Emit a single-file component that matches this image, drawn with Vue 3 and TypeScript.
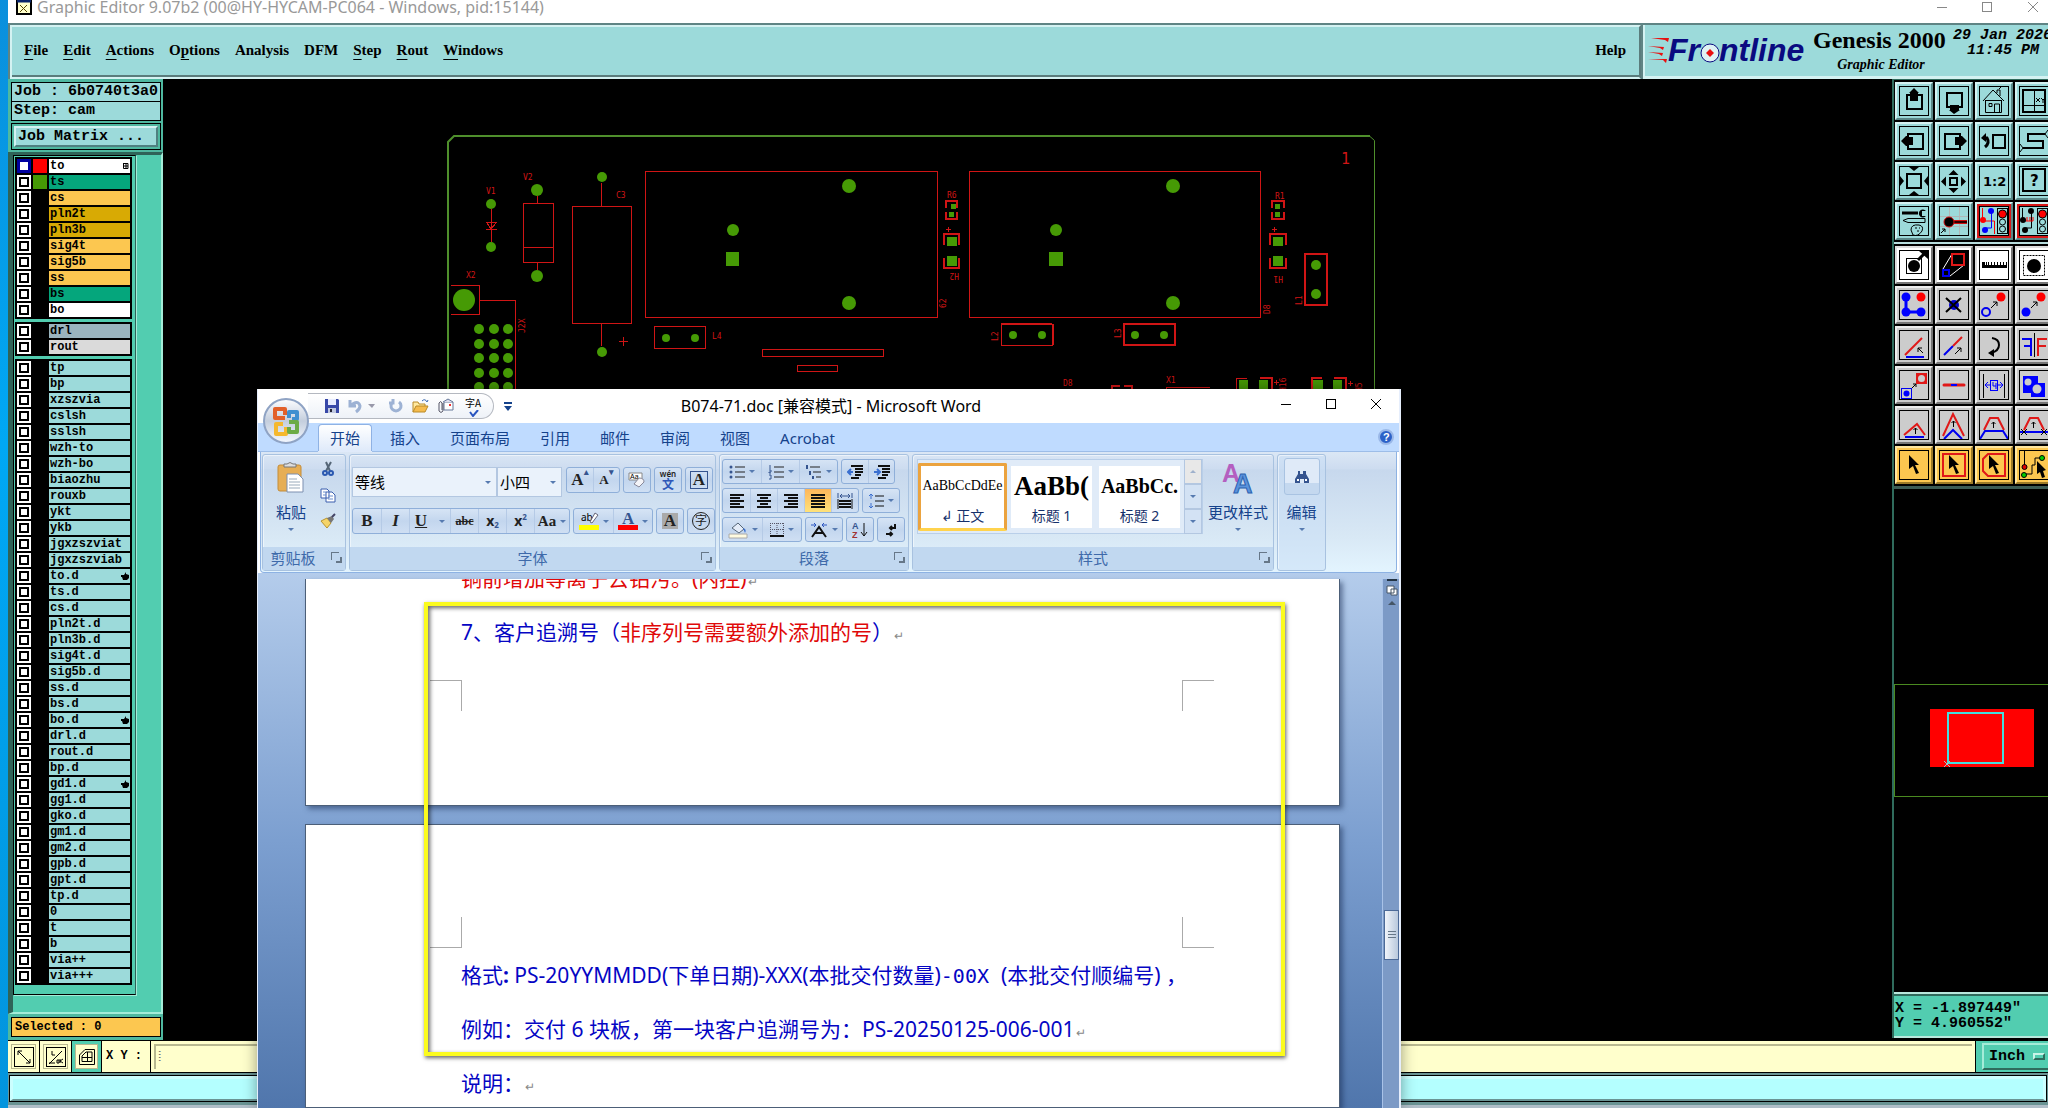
<script setup lang="ts">
import { ref } from 'vue'

interface Layer { name: string; color: string; swatch?: string; mark?: 'grid' | 'hand'; active?: boolean }
interface Tool { label: string; tone: string; art: string }

const AQUA = '#9cdada'
const menus: [string, string, string][] = [
  ['', 'F', 'ile'], ['', 'E', 'dit'], ['', 'A', 'ctions'], ['O', 'p', 'tions'], ['Analysis', '', ''],
  ['DFM', '', ''], ['', 'S', 'tep'], ['', 'R', 'out'], ['', 'W', 'indows'],
]

const plain = (names: string, color: string): Layer[] => names.split(' ').map((name) => ({ name, color }))
const hands = ['to.d', 'bo.d', 'gd1.d']
const groups: Layer[][] = [
  [
    { name: 'to', color: '#ffffff', swatch: '#ff0000', mark: 'grid', active: true },
    { name: 'ts', color: '#05a67c', swatch: '#469a05' },
    { name: 'cs', color: '#fcc750' },
    { name: 'pln2t', color: '#d8aa04' },
    { name: 'pln3b', color: '#d8aa04' },
    { name: 'sig4t', color: '#fcc750' },
    { name: 'sig5b', color: '#fcc750' },
    { name: 'ss', color: '#fcc750' },
    { name: 'bs', color: '#05a67c' },
    { name: 'bo', color: '#ffffff' },
  ],
  [{ name: 'drl', color: '#9ab4be' }, { name: 'rout', color: '#dadada' }],
  plain(
    'tp bp xzszvia cslsh sslsh wzh-to wzh-bo biaozhu rouxb ykt ykb jgxzszviat jgxzszviab to.d ts.d cs.d pln2t.d pln3b.d sig4t.d sig5b.d ss.d bs.d bo.d drl.d rout.d bp.d gd1.d gg1.d gko.d gm1.d gm2.d gpb.d gpt.d tp.d 0 t b via++ via+++',
    AQUA,
  ).map((l) => (hands.includes(l.name) ? { ...l, mark: 'hand' as const } : l)),
]

const k = 'fill="none" stroke="#000"'
const red = 'fill="none" stroke="#e01818" stroke-width="2"'
const blue = 'fill="none" stroke="#0000f0" stroke-width="2"'
const lights = `<rect x="18.5" y="2.5" width="10" height="25" ${k}/><circle cx="23.500" cy="8" r="4" fill="#f00" stroke="#000"/><circle cx="23.500" cy="16" r="3" ${k}/><circle cx="23.500" cy="23" r="3" ${k}/>`
const arrow = '<path d="M10 5l10 10-4 0 4 8-3 1-3-8-4 3z"/>'

const navTools: Tool[] = [
  { label: 'Pan up', tone: 'aqua', art: `<rect x="8" y="9" width="15" height="14" ${k} stroke-width="2"/><path d="M15 2l5 5h-1v8h-8V7h-1z"/>` },
  { label: 'Pan down', tone: 'aqua', art: `<rect x="8" y="7" width="15" height="14" ${k} stroke-width="2"/><path d="M15 28l-5-4h1v-5h9v5h1z"/>` },
  { label: 'Home', tone: 'aqua', art: `<path d="M4 15L14 4l11 11M6.500 14v12.500h16V14M6 14.500h17M18 7V4h3v6M10 17.500h3v3h-3zM15.500 26v-8h5v8M20 3l2-2" ${k}/>` },
  { label: 'Zoom XY', tone: 'aqua', art: `<rect x="4" y="4" width="22" height="22" ${k} stroke-width="2"/><path d="M15.500 4v22M4 19.500h22M17 12l4 4m0-4l-4 4M22 12l2 2 2-2m-2 2v3" ${k}/>` },
  { label: 'Pan left', tone: 'aqua', art: `<rect x="9" y="8" width="15" height="15" ${k} stroke-width="2"/><path d="M2 15l5-5h1v1h6v8H8v1H7z"/>` },
  { label: 'Pan right', tone: 'aqua', art: `<rect x="6" y="8" width="15" height="15" ${k} stroke-width="2"/><path d="M28 15l-5-5h-1v1h-6v8h6v1h1z"/>` },
  { label: 'Previous view', tone: 'aqua', art: `<rect x="14" y="9" width="12" height="13" ${k} stroke-width="2"/><path d="M4 12h4q3 5-2 9" ${k} stroke-width="3"/><path d="M2 12l5-5v9z"/>` },
  { label: 'Serpentine', tone: 'aqua', art: `<path d="M26 8H9v7h15v7H4" ${k} stroke-width="2"/><path d="M29 4l-3 4 3 4M1 18l3 4-3 4" ${k}/>` },
  { label: 'Zoom in', tone: 'aqua', art: `<rect x="8" y="8" width="14" height="14" ${k} stroke-width="2"/><path d="M10 1h10l-5 4zM10 29h10l-5-4zM1 10v10l4-5zM29 10v10l-4-5z"/>` },
  { label: 'Zoom out', tone: 'aqua', art: `<rect x="11" y="12" width="7" height="7" ${k} stroke-width="2"/><path d="M14.500 4l5 5h-10zM14.500 27l5-5h-10zM2 15.500l5-5v10zM27 15.500l-5-5v10z"/>` },
  { label: 'Scale 1:2', tone: 'aqua', art: '<text x="4" y="20" font-family="DejaVu Sans" font-weight="700" font-size="13">1:2</text>' },
  { label: 'Help', tone: 'aqua', art: `<rect x="4" y="3" width="22" height="22" ${k} stroke-width="2"/><text x="11" y="20" font-family="DejaVu Sans" font-weight="700" font-size="15">?</text>` },
  { label: 'Setup', tone: 'aqua', art: `<path d="M3 7h16" ${k} stroke-width="3"/><path d="M27 5a4 4 0 1 0 0 5h-4V5z"/><path d="M4 14.500l5-2h17v4H9zM12 24q0-6 8-5 5 1 3 6-4 6-9 4zM16 22h2m2 0h1m-3 3h2" ${k}/>` },
  { label: 'Snap', tone: 'aqua', art: `<path d="M10.500 0v30M20.500 0v30M0 10.500h30M0 20.500h30" stroke="#b0b8b8"/><path d="M12 16h16" stroke="#d01010" stroke-width="4"/><path d="M12 16h16" stroke="#300" stroke-width="2"/><circle cx="10" cy="16" r="5" stroke="#d01010"/><path d="M2 27l4-4m-3 0h3v3" ${k}/>` },
  { label: 'Nets', tone: 'aqua alert', art: `<path d="M3.500 2v13h12v13" ${k} style="stroke:#f00"/><path d="M12.500 4v18h-6" ${k} style="stroke:#00f"/><circle cx="4" cy="14" r="3" fill="#f00"/><circle cx="12" cy="5" r="3" fill="#00f"/><circle cx="6" cy="24" r="3" fill="#00f"/>${lights}` },
  { label: 'Shorts', tone: 'aqua alert', art: `<path d="M3.500 2v13h3M12.500 4v18h-6" ${k}/><path d="M7 15h7M8 11v4m3-4v4m3-4v4" stroke="#f00"/><circle cx="4" cy="14" r="3"/><circle cx="12" cy="5" r="3"/><circle cx="6" cy="24" r="3"/>${lights}` },
]
const editTools: Tool[] = [
  { label: 'Pad', tone: 'white', art: `<rect x="7.500" y="8.500" width="15" height="15" ${k}/><circle cx="15" cy="16" r="6"/><path d="M19 10l6-6" stroke="#000" stroke-width="3"/><path d="M20 1h9v8z"/>` },
  { label: 'Transform', tone: 'white', art: `<rect x="1" y="1" width="28" height="28"/><path d="M13 4L4 19M25 15L11 26" stroke="#fff"/><rect x="13" y="4" width="12" height="11" ${red}/><rect x="4" y="20" width="6" height="6" ${blue}/>` },
  { label: 'Measure', tone: 'white', art: '<path d="M3 12v6h25v-6h-1v3h-2v-3h-1v3h-2v-3h-1v3h-2v-3h-1v3h-2v-3h-1v3h-2v-3h-1v3h-2v-3h-1v3h-2v-3H8v3H6v-3z"/>' },
  { label: 'Select pad', tone: 'white', art: `<rect x="4.500" y="5.500" width="21" height="20" ${k} stroke-dasharray="2 1"/><circle cx="15" cy="16" r="7"/>` },
  { label: 'Add', tone: 'gray', art: '<path d="M7 7v15h15" fill="none" stroke="#00f" stroke-width="3"/><circle cx="7" cy="7" r="4.500" fill="#00f"/><circle cx="7" cy="22" r="4.500" fill="#00f"/><circle cx="22" cy="22" r="4.500" fill="#00f"/><circle cx="22" cy="7" r="4.500" fill="#f00"/>' },
  { label: 'Delete', tone: 'gray', art: `<circle cx="15" cy="15" r="5" fill="#00c"/><path d="M7 8l15 14M22 8L7 22" ${k} stroke-width="2"/>` },
  { label: 'Copy', tone: 'gray', art: `<circle cx="7" cy="22" r="4" ${blue}/><circle cx="22" cy="7" r="4.500" fill="#f00"/><path d="M12 18l6-6m-4 0h4v4" ${k}/>` },
  { label: 'Move', tone: 'gray', art: `<circle cx="7" cy="22" r="4.500" fill="#00f"/><circle cx="22" cy="7" r="4.500" fill="#f00"/><path d="M12 18l6-6m-4 0h4v4" ${k}/>` },
  { label: 'Angle', tone: 'gray', art: `<path d="M6 25L23 8" ${red}/><path d="M7 27h18" ${blue}/><path d="M24 23l-5-5m0 4v-4h4" ${k}/>` },
  { label: 'Extend', tone: 'gray', art: `<path d="M5 25l9-9" ${blue}/><path d="M14 16l9-9" ${red}/><path d="M16 24l6-6m-4 0h4v4" ${k}/>` },
  { label: 'Rotate', tone: 'gray', art: `<path d="M13 8q7 1 7 7t-8 8" ${k} stroke-width="2"/><path d="M9 23l6-4v8z"/>` },
  { label: 'Mirror', tone: 'gray', art: `<path d="M15.500 3v24" ${k}/><path d="M3 9h9v17M12 16H5" ${blue}/><path d="M28 9h-9v17M19 16h8" ${red}/>` },
  { label: 'Change symbol', tone: 'gray', art: `<rect x="2.500" y="18.500" width="10" height="10" ${blue} style="stroke-width:1"/><circle cx="7.500" cy="23.500" r="3" fill="#00f"/><rect x="17" y="3" width="11" height="11" fill="#e01818"/><circle cx="22.500" cy="8.500" r="3.500" fill="#ccc"/><path d="M13 18l4-4m-3 0h3v3" ${k}/>` },
  { label: 'Break', tone: 'gray', art: '<path d="M5 15h20" stroke="#e01818" stroke-width="3" stroke-linecap="round"/><path d="M12 15h6" stroke="#00f" stroke-width="2"/>' },
  { label: 'Spacing', tone: 'gray', art: `<path d="M4.500 4v24M25.500 4v24" ${k}/><path d="M6 15h5m8 0h5M9 12l-3 3 3 3M21 12l3 3-3 3" stroke="#00f" fill="none"/><rect x="11.500" y="10.500" width="7" height="10" stroke="#00f" fill="none"/><path d="M14 12v4h3m0-3v6" stroke="#00f" fill="none"/>` },
  { label: 'Merge', tone: 'gray', art: '<rect x="4" y="6" width="15" height="17" fill="#00f"/><rect x="12" y="13" width="14" height="14" fill="#00f"/><circle cx="9" cy="12" r="3.500" fill="#ccc"/><circle cx="18" cy="19" r="4.500" fill="#ccc"/>' },
  { label: 'Corner low', tone: 'gray', art: `<path d="M5 25L18 14l8 11" ${red}/><path d="M6 27h19" ${blue}/><path d="M16.500 24v-6m-2 2l2-2 2 2" ${k}/>` },
  { label: 'Corner high', tone: 'gray', art: `<path d="M4 26L14 4l11 22" ${red}/><path d="M5 29l9-9 9 9" ${blue}/><path d="M14.500 17v-6m-2 2l2-2 2 2" ${k}/>` },
  { label: 'Bridge', tone: 'gray', art: `<path d="M5 20l6-12h8l6 12" ${red}/><path d="M1 29l5-8h18l5 8" ${blue}/><path d="M14.500 18v-6m-2 2l2-2 2 2" ${k}/>` },
  { label: 'Bridge cut', tone: 'gray', art: `<path d="M5 20l6-12h8l6 12" ${red}/><path d="M1 22h28" ${blue}/><path d="M2 19l6 6m0-6l-6 6M22 19l6 6m0-6l-6 6M14.500 18v-6m-2 2l2-2 2 2" ${k}/>` },
  { label: 'Select', tone: 'amber', art: arrow },
  { label: 'Select box', tone: 'amber', art: `<rect x="4" y="4" width="22" height="22" ${red}/>${arrow}` },
  { label: 'Select polygon', tone: 'amber', art: `<path d="M9 4h17v22H9l-5-5V9z" ${red}/>${arrow}` },
  { label: 'Select net', tone: 'amber', art: `<path d="M5.500 1v16M6 24h7v-9h3V8h6" ${k}/><circle cx="5.500" cy="17" r="2.500" fill="#d00" stroke="#000"/><circle cx="5" cy="25" r="2.500" fill="#0c0" stroke="#000"/><circle cx="23" cy="8" r="2.500" fill="#0c0" stroke="#000"/><path d="M18 11l9 9-3 1 2 6-3 1-2-6-3 2z"/>` },
]

const dots = [329, 344, 358, 373, 387].flatMap((y) => [479, 494, 508].map((x) => ({ x, y })))
const vias = [
  [491, 204, 5], [491, 247, 5], [537, 190, 6], [537, 276, 6], [602, 177, 5], [602, 352, 5], [464, 300, 11],
  [849, 186, 7], [733, 230, 6], [849, 303, 7], [1173, 186, 7], [1056, 230, 6], [1173, 303, 7],
  [1316, 265, 5], [1316, 294, 5], [666, 338, 4], [695, 338, 4], [1013, 335, 4], [1042, 335, 4], [1135, 335, 4], [1164, 335, 4],
]
const pads = [
  [726, 252, 13, 14], [1049, 252, 14, 14], [951, 204, 5, 5], [949, 212, 5, 5], [947, 237, 10, 9], [947, 256, 10, 10],
  [1275, 204, 5, 5], [1275, 212, 5, 5], [1273, 237, 10, 9], [1273, 256, 10, 10],
  [1239, 380, 9, 10], [1259, 380, 9, 10], [1313, 380, 10, 10], [1333, 380, 9, 10],
]
const marks: [string, number, number, number][] = [
  ['V1', 486, 194, 0], ['V2', 523, 180, 0], ['C3', 616, 198, 0], ['X2', 466, 278, 0], ['J2X', 525, 333, -90], ['L4', 712, 339, 0],
  ['R6', 947, 198, 0], ['H2', 959, 273, 180], ['62', 946, 308, -90], ['R1', 1275, 199, 0], ['H1', 1283, 276, 180],
  ['L1', 1302, 305, -90], ['D8', 1270, 314, -90], ['L2', 998, 341, -90], ['L3', 1121, 338, -90],
  ['D8', 1063, 386, 0], ['X1', 1166, 383, 0], ['H16', 1286, 392, -90], ['H5', 1362, 392, -90],
]

const tabs = ['开始', '插入', '页面布局', '引用', '邮件', '审阅', '视图', 'Acrobat']
const layerState = ref<Record<string, boolean>>({})
const xy = ref('')

const up = '#35548f'
const row = (a: number, b: number, y: number) => `<path d="M${a} ${y + 1}H${b}" stroke="#111" stroke-width="2"/>`
const five = (spans: [number, number][]) => spans.map((s, i) => row(s[0], s[1], 1 + i * 3)).join('')
const wide: [number, number] = [1, 15]
const aligns = [
  { label: '左对齐', art: five([[1, 15], [1, 11], [1, 15], [1, 11], [1, 15]]) },
  { label: '居中', art: five([[1, 15], [4, 12], [1, 15], [4, 12], [1, 15]]) },
  { label: '右对齐', art: five([[1, 15], [5, 15], [1, 15], [5, 15], [1, 15]]) },
  { label: '两端对齐', art: five([wide, wide, wide, wide, wide]), on: true },
  { label: '分散对齐', art: '<path d="M1 0v5M15 0v5M3 3h10M5 1L3 3l2 2M11 1l2 2-2 2" fill="none" stroke="#35548f"/><path d="M2 8h12M2 11h12M2 14h12" stroke="#111" stroke-width="2"/><path d="M1 6v10M15 6v10" stroke="#111"/>' },
]
const lists = [
  { label: '项目符号', art: `<path d="M6 3h10M6 8h10M6 13h10" stroke="#222"/><circle cx="2" cy="3" r="1.500" fill="${up}"/><circle cx="2" cy="8" r="1.500" fill="${up}"/><circle cx="2" cy="13" r="1.500" fill="${up}"/>` },
  { label: '编号', art: `<path d="M6 3h10M6 8h10M6 13h10" stroke="#222"/><path d="M2 1v4M1 6h2v2H1v1h2M1 11h2v4H1" stroke="${up}" fill="none"/>` },
  { label: '多级列表', art: `<path d="M4 3h10M7 8h8M10 13h5" stroke="#222"/><path d="M1 1v4M4 7v3h-1M7 12v3" stroke="${up}" fill="none" stroke-width="2"/>` },
]
const indents = [
  { label: '减少缩进', art: `<path d="M4 2h12M8 5h8M8 8h8M8 11h6M4 14h8" stroke="#111" stroke-width="2"/><path d="M6 8H1m3-3L1 8l3 3" stroke="#3a6fd0" fill="none" stroke-width="2"/>` },
  { label: '增加缩进', art: `<path d="M4 2h12M8 5h8M8 8h8M8 11h6M4 14h8" stroke="#111" stroke-width="2"/><path d="M0 8h5M3 5l3 3-3 3" stroke="#3a6fd0" fill="none" stroke-width="2"/>` },
]
</script>

<template>
  <div class="desktop">
    <div class="genesis">
      <header class="titlebar">
        <svg class="app-icon" width="16" height="16" viewBox="0 0 16 16"><rect x="1" y="1" width="14" height="13" fill="#ffc" stroke="#000" stroke-width="2" /><path d="M1 1h14" stroke="#0a246a" stroke-width="3" /><path d="M4 5l7 7M11 5l-7 7" stroke="#554400" /></svg>
        <span class="caption">Graphic Editor 9.07b2 (00@HY-HYCAM-PC064 - Windows, pid:15144)</span>
        <svg width="104" height="14" viewBox="0 0 104 14" fill="none" stroke="#888"><path d="M2 7.500h10M93 2l10 10M103 2L93 12" /><rect x="47.500" y="2.500" width="9" height="9" /></svg>
      </header>

      <div class="topbar">
        <nav class="menubar">
          <a v-for="m in menus" :key="m.join('')" href="#">{{ m[0] }}<u>{{ m[1] }}</u>{{ m[2] }}</a>
          <a href="#" class="help">Help</a>
        </nav>
        <div class="brand">
          <svg width="164" height="34" viewBox="0 0 164 34">
            <path d="M5 5h18l-1 4-3-2zM2 13l16 1-1 3-3-2zM2 19l15 1-1 3-3-2zM2 26h19l-1 4-3-3z" fill="#e81010" />
            <g font-family="Liberation Sans" font-size="32" font-weight="700" font-style="italic" fill="#0a0a80"><text x="22" y="28">Fr</text><text x="73" y="28">ntline</text></g>
            <circle cx="64" cy="20" r="9" fill="#dff2f4" stroke="#0a0a80" stroke-width="1" /><path d="M64 16l4 4-4 4-4-4z" fill="#e81010" />
          </svg>
          <div class="product"><strong>Genesis 2000</strong><em>Graphic Editor</em></div>
          <div class="clock"><span>29 Jan 2026</span><span>11:45 PM</span></div>
        </div>
      </div>

      <div class="work">
        <aside class="side">
          <div class="field">Job : 6b0740t3a0</div>
          <div class="field step">Step: cam</div>
          <div class="matrix"><button>Job Matrix ...</button></div>
          <div class="layers">
            <div class="frame">
              <div v-for="(g, gi) in groups" :key="gi" class="group">
                <div v-for="l in g" :key="l.name" class="layer">
                  <input :id="'ly-' + l.name" v-model="layerState[l.name]" type="checkbox" :class="{ active: l.active }">
                  <i :style="{ background: l.swatch }"></i>
                  <label :for="'ly-' + l.name" :style="{ background: l.color }">{{ l.name }}
                    <svg v-if="l.mark === 'grid'" width="6" height="6"><path d="M0 .5h5v5H.5V0M3 0v5M0 3h5" fill="none" stroke="#000" /></svg>
                    <svg v-if="l.mark === 'hand'" width="8" height="8"><path d="M0 3h3l2-3v2l3 1v3L6 8H2L1 5H0z" /></svg>
                  </label>
                </div>
              </div>
            </div>
          </div>
          <div class="selected">Selected : 0</div>
        </aside>

        <main class="canvas">
          <svg width="100%" height="100%">
            <g transform="translate(-163 -79)">
              <path d="M448 400V142l6-6H1370" fill="none" stroke="#4f8f2c" stroke-width="2" />
              <path d="M1370 136.500l4.500 4V400" fill="none" stroke="#4f8f2c" />
              <g fill="none" stroke="#d01515" shape-rendering="crispEdges">
                <path d="M491.500 209v33M486 222h11M487 223l4 6 5-6M486 229h11M537.500 196v7M523.500 203.500h30v59h-30zM523 247.500h30M537.500 262v8M601.500 183v23M572.500 206.500h59v117h-59zM601.500 323v23M619 341.500h9M623.500 337v9" />
                <path d="M645.500 171.500h292v146h-292zM654.500 326.500h51v22h-51zM762.500 349.500h121v7h-121zM797.500 365.500h40v6h-40zM451 285.500h28v29h-28M479 300.500h36V400" />
                <path d="M969.500 171.500h291v146h-291zM1001.500 324.500h51v21h-51zM946 229.500h5M948.500 227v5M1272 229.500h5M1274.500 227v5M1166 400v-12.500h44M1274 382.500h5M1276.500 380v5M1348 383.500h5M1350.500 381v5M1236.500 390v-12h10" />
                <path d="M1053 324v21M1001 324h51M1124 324h51v21h-51zM1305 254h22v51h-22zM946 208v-7h11v7M946 212v7h11v-7M944 245v-11h15v11M944 258v10h15v-10M1272 208v-7h12v7M1272 212v7h12v-7M1270 245v-11h16v11M1270 258v10h16v-10M1260 378h12v12M1312 390v-12h10M1334 378h12v12M1112 390v-4h8M1124 386h8v4" stroke-width="2" />
              </g>
              <g fill="#469a05">
                <circle v-for="(v, i) in vias" :key="i" :cx="v[0]" :cy="v[1]" :r="v[2]" />
                <circle v-for="(d, i) in dots" :key="'d' + i" :cx="d.x" :cy="d.y" r="5" />
                <rect v-for="(p, i) in pads" :key="'p' + i" :x="p[0]" :y="p[1]" :width="p[2]" :height="p[3]" />
              </g>
              <g fill="#d01515" font-family="DejaVu Sans Mono" font-size="8">
                <text v-for="(m, i) in marks" :key="i" :transform="`translate(${m[1]} ${m[2]}) rotate(${m[3]})`">{{ m[0] }}</text>
                <text x="1341" y="164" font-size="15">1</text>
              </g>
            </g>
          </svg>
        </main>

        <aside class="tools">
          <div class="grid nav"><button v-for="t in navTools" :key="t.label" :class="t.tone" :aria-label="t.label"><svg width="28" height="28" viewBox="1 1 28 28" v-html="t.art"></svg></button></div>
          <div class="grid edit"><button v-for="t in editTools" :key="t.label" :class="t.tone" :aria-label="t.label"><svg width="28" height="28" viewBox="1 1 28 28" v-html="t.art"></svg></button></div>
          <div class="overview">
            <svg width="156" height="114" viewBox="0 0 156 114"><rect x=".5" y=".5" width="160" height="112" fill="none" stroke="#4a8a20" /><rect x="36" y="25" width="104" height="58" fill="#f00" /><rect x="54" y="29" width="55" height="50" fill="none" stroke="#4dd" stroke-width="2" /><path d="M50 83l6-6M50 77l6 6" stroke="#9cc" /></svg>
          </div>
          <div class="coords"><span>X = -1.897449"</span><span>Y = 4.960552"</span></div>
        </aside>
      </div>

      <div class="command">
        <button aria-label="Diagonal"><svg width="20" height="20" fill="none" stroke="#000"><rect x=".5" y=".5" width="19" height="19" /><path d="M4 4l12 12M4 8V4h4M16 12v4h-4" /></svg></button>
        <button aria-label="Angle"><svg width="20" height="20" fill="none" stroke="#000"><rect x=".5" y=".5" width="19" height="19" /><path d="M3 17L16 4M3 16h6M6 4v4h3M11 13h2v3h-2zM14 12v4m0-2l3-2m-3 2l3 2" /></svg></button>
        <button class="on" aria-label="Grid"><svg width="16" height="16" fill="none" stroke="#000"><path d="M.5 15.500V6L6 .5h9.500v15zM3 12.500V7l4-4h6v9.500zM8.500 3v10M3 8.500h10" /></svg></button>
        <label for="xy">X Y :</label>
        <input id="xy" v-model="xy" type="text" placeholder="⦙">
        <div class="unit"><button>Inch <i></i></button></div>
      </div>
      <div class="status"><div></div></div>
      <div class="floor"></div>
    </div>

    <section class="word">
      <header class="w-title">
        <div class="qat">
          <svg width="16" height="16" viewBox="0 0 16 16"><path d="M1 1h13l1 1v13H1z" fill="#3848a8" /><path d="M4 1h8v6H4z" fill="#e8ecff" /><path d="M4 10h8v5H4z" fill="#c0c8e0" /><path d="M6 11h2v3H6z" fill="#223" /></svg>
          <svg width="27" height="16" viewBox="0 0 27 16" class="undo"><path d="M2 2v6h6M2 8q8-7 10 0 0 3-4 6" fill="none" stroke="#9db2d4" stroke-width="3" /><path d="M20 6h7l-3 4z" fill="#99a" /></svg>
          <svg width="16" height="16" viewBox="0 0 16 16"><path d="M11 4a5 5 0 1 1-6 0M5 1v4H1" fill="none" stroke="#9db2d4" stroke-width="3" /></svg>
          <svg width="17" height="16" viewBox="0 0 17 16"><path d="M1 14V4h5l1 2h6v3" fill="#ffe9a0" stroke="#b98a28" /><path d="M1 14l3-6h12l-3 6z" fill="#f5bb4d" stroke="#b98a28" /><path d="M10 3q3-3 5 1l1-2" fill="none" stroke="#3868b0" /></svg>
          <svg width="17" height="16" viewBox="0 0 17 16"><path d="M7 4h9v8H7z" fill="#fff" stroke="#66789a" /><path d="M6 4l5-3 5 3" fill="#dde" stroke="#66789a" /><path d="M12 6h2v2h-2z" fill="#e33" /><path d="M6 5v8q-2 3-4 0V5q2-3 3 0v7" fill="none" stroke="#556" /></svg>
          <span class="spell">字A<svg width="10" height="7"><path d="M1 2l3 4 5-6" fill="none" stroke="#2a55c0" stroke-width="2" /></svg></span>
        </div>
        <svg class="more" width="8" height="9"><path d="M0 1h8" stroke="#15428b" stroke-width="2" /><path d="M0 4h8L4 9z" fill="#15428b" /></svg>
        <h1>B074-71.doc [兼容模式] - Microsoft Word</h1>
        <svg width="102" height="14" viewBox="0 0 102 14" fill="none" stroke="#000"><path d="M1 7.500h10M91 2l10 10M101 2L91 12" /><rect x="46.500" y="2.500" width="9" height="9" /></svg>
      </header>
      <button class="orb" aria-label="Office">
        <svg width="46" height="46" viewBox="0 0 46 46">
          <defs><linearGradient id="orb" x1="0" y1="0" x2="0" y2="1"><stop offset="0" stop-color="#fdfdff" /><stop offset=".5" stop-color="#c4cedd" /><stop offset="1" stop-color="#f4f8ff" /></linearGradient></defs>
          <circle cx="23" cy="23" r="22" fill="url(#orb)" stroke="#8fa3c4" stroke-width="2" />
          <g fill="none" stroke-width="4" stroke-linejoin="round"><path d="M22 20h-10V11h10v6" stroke="#e2602a" /><path d="M26 20v-6h8v7h-5" stroke="#3f8fd0" /><path d="M20 26h-7v10h10V29" stroke="#f5b82e" /><path d="M26 24h8v10h-8v-5" stroke="#6cab45" /></g>
        </svg>
      </button>

      <nav class="tabs">
        <button v-for="(t, i) in tabs" :key="t" :class="{ cur: i === 0 }">{{ t }}</button>
        <svg class="q" width="16" height="16" viewBox="0 0 16 16"><circle cx="8" cy="8" r="7" fill="#2c62c8" stroke="#9ab8e8" stroke-width="2" /><text x="5" y="12" font-family="Liberation Sans" font-weight="700" font-size="11" fill="#fff">?</text></svg>
      </nav>

      <div class="ribbon">
        <div class="rg clip">
          <div class="rb">
            <button class="big"><svg width="28" height="32" viewBox="0 0 28 32"><rect x="1" y="3" width="23" height="26" rx="2" fill="#e6ae55" stroke="#c48c38" /><path d="M7 5V2h3q3-3 6 0h3v3z" fill="#ddd" stroke="#777" /><path d="M10 12h11l5 5v13H10z" fill="#fff" stroke="#7c8fb0" /><path d="M12 17h8M12 20h11M12 23h11M12 26h11" stroke="#9ab" /></svg><span>粘贴</span><i class="car"></i></button>
            <div class="small">
              <button aria-label="剪切"><svg width="16" height="16" viewBox="0 0 16 16"><path d="M6 1l4 9M11 1L6 10" stroke="#567" stroke-width="2" /><circle cx="5" cy="12" r="2" fill="none" stroke="#2a58b0" stroke-width="2" /><circle cx="11" cy="12" r="2" fill="none" stroke="#2a58b0" stroke-width="2" /></svg></button>
              <button aria-label="复制"><svg width="16" height="16" viewBox="0 0 16 16"><path d="M1 2h6l2 2v7H1zM6 5h6l3 3v7H6z" fill="#fff" stroke="#3a5fae" /><path d="M3 5h3M3 8h3M8 9h5M8 12h5" stroke="#6a8fce" /></svg></button>
              <button aria-label="格式刷"><svg width="16" height="16" viewBox="0 0 16 16"><path d="M1 8l6-3 4 5-4 5z" fill="#f5d469" stroke="#b9942f" /><path d="M7 5l5-2 2 3-3 4z" fill="#777" /><path d="M12 4l3-3" stroke="#446" stroke-width="2" /></svg></button>
            </div>
          </div>
          <footer>剪贴板<i class="dlg"></i></footer>
        </div>

        <div class="rg font">
          <div class="rb rows">
            <div class="line">
              <div class="combos">
                <span class="combo face"><select aria-label="字体"><option>等线</option></select></span>
                <span class="combo size"><select aria-label="字号"><option>小四</option></select></span>
              </div>
              <div class="bg"><button class="serif">A<sup>▴</sup></button><button class="serif mini">A<sup>▾</sup></button></div>
              <div class="bg"><button aria-label="清除格式"><svg width="18" height="18" viewBox="0 0 18 18"><path d="M1 2h13v7H1z" fill="#fff" stroke="#888" /><text x="2" y="8" font-size="7" font-family="Liberation Sans">Aa</text><path d="M6 13l5-6q5 0 5 4l-5 5z" fill="#f4f4f8" stroke="#889" /></svg></button></div>
              <div class="bg"><button class="wen"><small>wén</small><b>文</b></button></div>
              <div class="bg"><button class="serif boxed"><span>A</span></button></div>
            </div>
            <div class="line">
              <div class="bg w">
                <button class="serif">B</button><button class="serif it">I</button><button class="serif un car-r"><span>U</span><i class="car"></i></button><button class="serif abc">abc</button><button class="sub">x<sub>2</sub></button><button class="sub">x<sup>2</sup></button><button class="serif aa car-r">Aa<i class="car"></i></button>
              </div>
              <div class="bg w2">
                <button class="car-r" aria-label="突出显示"><svg width="20" height="20" viewBox="0 0 20 20"><text x="2" y="10" font-family="Noto Sans" font-size="10">ab</text><path d="M11 11l5-9 3 2-6 8z" fill="#fff" stroke="#667" /><path d="M0 14h20v5H0z" fill="#ff0" /></svg><i class="car"></i></button>
                <button class="car-r" aria-label="字体颜色"><svg width="20" height="20" viewBox="0 0 20 20"><text x="4" y="13" font-family="Liberation Serif" font-weight="700" font-size="17" fill="#35548f">A</text><path d="M0 14h20v5H0z" fill="#f00" /></svg><i class="car"></i></button>
              </div>
              <div class="bg"><button class="serif shaded"><span>A</span></button></div>
              <div class="bg"><button class="ring"><span>字</span></button></div>
            </div>
          </div>
          <footer>字体<i class="dlg"></i></footer>
        </div>

        <div class="rg para">
          <div class="rb rows">
            <div class="line">
              <div class="bg w3"><button v-for="a in lists" :key="a.label" class="car-r" :aria-label="a.label"><svg width="16" height="16" v-html="a.art"></svg><i class="car"></i></button></div>
              <div class="bg w26"><button v-for="a in indents" :key="a.label" :aria-label="a.label"><svg width="16" height="16" v-html="a.art"></svg></button></div>
            </div>
            <div class="line">
              <div class="bg w27"><button v-for="a in aligns" :key="a.label" :class="{ on: a.on }" :aria-label="a.label"><svg width="16" height="16" v-html="a.art"></svg></button></div>
              <div class="bg w38"><button class="car-r" aria-label="行距"><svg width="16" height="16"><path d="M7 3h9M7 8h9M7 13h9" stroke="#111" /><path d="M3 1v5M1 3l2-2 2 2M3 10v5M1 13l2 2 2-2" fill="none" stroke="#3a6fd0" /></svg><i class="car"></i></button></div>
            </div>
            <div class="line">
              <div class="bg w3b">
                <button class="car-r" aria-label="底纹"><svg width="20" height="18"><path d="M4 7l6-5 6 6-5 4z" fill="#e4ecf8" stroke="#567" /><path d="M15 7q4 1 2 5z" fill="#3a6fd0" /><path d="M1 13h18v4H1z" fill="#fffbe0" stroke="#aaa" /></svg><i class="car"></i></button>
                <button class="car-r" aria-label="边框"><svg width="14" height="14"><path d="M.5 0v12M7 0v12M13.500 0v12M0 .5h14M0 6.500h14" stroke="#556" stroke-dasharray="1 1" /><path d="M0 13h14" stroke="#111" stroke-width="2" /></svg><i class="car"></i></button>
              </div>
              <div class="bg w38"><button class="car-r" aria-label="中文版式"><svg width="18" height="16"><path d="M2 15l7-10 7 10M5 11h8" stroke="#111" fill="none" stroke-width="2" /><path d="M1 3h5M4 1l2 2-2 2M17 3h-5M14 1l-2 2 2 2" stroke="#2a55c0" fill="none" /></svg><i class="car"></i></button></div>
              <div class="bg"><button aria-label="排序"><svg width="16" height="18"><text x="0" y="8" font-size="9" font-family="Liberation Sans" font-weight="700" fill="#35548f">A</text><text x="0" y="17" font-size="9" font-family="Liberation Sans" font-weight="700" fill="#a03030">Z</text><path d="M12 2v13M9 11l3 4 3-4" stroke="#111" fill="none" /></svg></button></div>
              <div class="bg"><button aria-label="显示标记"><svg width="16" height="16"><path d="M12 2v4H7M9 4L7 6l2 2M3 12h6M7 10l2 2-2 2" stroke="#111" fill="none" stroke-width="2" /></svg></button></div>
            </div>
          </div>
          <footer>段落<i class="dlg"></i></footer>
        </div>

        <div class="rg style">
          <div class="rb">
            <div class="gallery">
              <button class="st sel"><span class="s1">AaBbCcDdEe</span><small>↲ 正文</small></button>
              <button class="st"><span class="s2">AaBb(</span><small>标题 1</small></button>
              <button class="st"><span class="s3">AaBbCc.</span><small>标题 2</small></button>
              <div class="spin"><button aria-label="上"><i class="car upw"></i></button><button aria-label="下"><i class="car"></i></button><button aria-label="更多"><i class="car bar"></i></button></div>
            </div>
            <button class="big chg"><svg width="32" height="32" viewBox="0 0 32 32"><g font-family="Liberation Sans" font-weight="700"><text x="0" y="20" font-size="25" fill="#b45fc0">A</text><text x="11" y="31" font-size="27" fill="#5b93dc" stroke="#2c62b0">A</text></g></svg><span>更改样式</span><i class="car"></i></button>
          </div>
          <footer>样式<i class="dlg"></i></footer>
        </div>

        <div class="rg find">
          <button class="big"><span class="tile"><svg width="16" height="16"><path d="M4 2h2v3h3V2h3v3l3 5v4h-5v-4H6v4H1v-4l3-5z" fill="#35548f" /><path d="M3 11h2M11 11h2" stroke="#fff" stroke-width="2" /></svg></span><span>编辑</span><i class="car"></i></button>
        </div>
      </div>

      <div class="doc">
        <div class="pages">
          <article class="page first">
            <p class="r">铜前增加等离子去钻污。(内控)<s>↵</s></p>
            <p>7、客户追溯号（<span class="r">非序列号需要额外添加的号</span>）<s>↵</s></p>
            <div class="corners top"><i></i><i></i></div>
          </article>
          <article class="page second">
            <div class="corners bottom"><i></i><i></i></div>
            <p>格式<b>:</b> PS-20YYMMDD(下单日期)-XXX(本批交付数量)<span class="mono">-00X </span>(本批交付顺编号) ，</p>
            <p>例如：交付 6 块板，第一块客户追溯号为：PS-20250125-006-001<s>↵</s></p>
            <p>说明：<s>↵</s></p>
          </article>
          <div class="highlight"></div>
        </div>
        <div class="scroll">
          <svg width="16" height="32"><path d="M3 1h10" stroke="#234" stroke-width="2" /><path d="M3 7h7v7H3zM7 10h6v6H7z" fill="#fff" stroke="#456" /><path d="M4 26l4-4 4 4z" fill="#456" /></svg>
          <div class="thumb"></div>
        </div>
      </div>
    </section>
  </div>
</template>

<style>
body { margin: 0; overflow: hidden; }
</style>

<style scoped>
* { box-sizing: border-box; }
button, input, select { margin: 0; padding: 0; border: 0; border-radius: 0; background: none; font: inherit; color: inherit; }
a { color: inherit; text-decoration: none; }
svg { display: block; flex: none; }
.desktop { position: relative; min-height: 100vh; padding-left: 8px; display: flex; flex-direction: column; overflow: hidden; background: linear-gradient(#0a8fdc, #00a8f4 40%, #0294de); }
.genesis { flex: 1; display: flex; flex-direction: column; background: #000; color: #000; }

.titlebar { display: flex; align-items: flex-start; height: 23px; padding: 0 9px 0 8px; background: #fff; }
.app-icon { margin-right: 5px; }
.caption { flex: 1; font: 16px/14px "Noto Sans", sans-serif; color: #999; }

.topbar { display: flex; height: 56px; background: #5f8484; padding-top: 2px; }
.menubar { flex: 1; display: flex; align-items: center; gap: 15px; margin: 0 2px; padding: 0 13px 4px 12px; background: #9cdada; border: 2px solid #d4f2f2; border-right-color: #5a7c7c; border-bottom-color: #d4f2f2; box-shadow: inset 0 -2px #5a7c7c; font: bold 15px/20px "Liberation Serif", serif; }
.menubar u { text-underline-offset: 4px; }
.help { margin-left: auto; }
.brand { width: 405px; display: flex; padding-left: 1px; overflow: hidden; background: #9cdada; border-bottom: 3px solid #d4f2f2; border-left: 2px solid #d4f2f2; }
.brand > svg { margin: 8px 3px 0 0; }
.product { flex: none; width: 136px; display: flex; flex-direction: column; font-family: "Liberation Serif", serif; white-space: nowrap; }
.product strong { font-size: 24px; line-height: 30px; }
.product em { align-self: center; font-size: 14px; line-height: 20px; font-weight: 700; }
.clock { flex: none; width: 99px; margin: 3px 0 0 4px; display: flex; flex-direction: column; font: italic bold 15px/15px "Liberation Mono", monospace; white-space: nowrap; }
.clock span:last-child { margin-left: 14px; }

.work { flex: 1; display: flex; }
.side { width: 155px; flex: none; display: flex; flex-direction: column; padding: 3px 2px 3px 0; background: #4fb8a0; }
.field { height: 20px; margin-left: 3px; padding-left: 2px; border: 1px solid #000; background: #9cdada; font: bold 15px/18px "Liberation Mono", monospace; white-space: nowrap; overflow: hidden; }
.step { border-top: 0; height: 19px; }
.matrix { height: 27px; margin: 2px 0 2px 3px; padding: 2px; border: 1px solid #000; }
.matrix button { width: 100%; height: 100%; padding-left: 2px; text-align: left; background: #9cdada; border: 2px solid #d4f2f2; border-right-color: #4f8080; border-bottom-color: #4f8080; font: bold 15px/17px "Liberation Mono", monospace; }
.layers { flex: 1; margin-right: -2px; background: #52cdb0; border: solid #2f6358; border-width: 3px 2px 2px 5px; border-right-color: #a4ecd8; border-bottom-color: #a4ecd8; }
.frame { width: 123px; padding: 1px 1px 9px; border: 1px solid #000; border-right-color: #2f6358; box-shadow: 1px 1px #a4ecd8; display: flex; flex-direction: column; gap: 3px; }
.group { width: 117px; padding: 2px 2px 0; background: #000; }
.layer { display: flex; gap: 2px; height: 16px; padding-bottom: 2px; }
.layer input { appearance: none; width: 14px; height: 14px; flex: none; background: #fff; border: 2px solid #fff; box-shadow: inset 0 0 0 2px #000; }
.layer input.active { background: #fff; border-color: #0000a0; box-shadow: inset 0 0 0 1px #0000a0; }
.layer i { width: 14px; flex: none; }
.layer label { flex: 1; display: flex; align-items: center; justify-content: space-between; padding: 0 1px; font: bold 12px/14px "Liberation Mono", monospace; }
.selected { height: 20px; margin: 3px 0 0 3px; padding-left: 3px; background: #fcc750; border: 1px solid #000; font: bold 12px/18px "Liberation Mono", monospace; }

.canvas { flex: 1; min-width: 0; position: relative; overflow: hidden; background: #000; }
.canvas svg { position: absolute; inset: 0; }
.tools { width: 156px; flex: none; display: flex; flex-direction: column; overflow: hidden; border-left: 2px solid #2f6b5c; margin-bottom: 2px; }
.grid { width: 160px; display: grid; grid-template-columns: repeat(4, 38px); gap: 2px; padding: 2px 1px 2px; }
.grid button { width: 38px; height: 38px; padding: 2px; border: 2px solid; }
.grid svg { width: 30px; height: 30px; border: 1px solid #000; }
.nav { border-top: 1px solid #2f6b5c; border-bottom: 2px solid #b8dede; }
.edit { border-bottom: 3px solid #3d5c55; }
.aqua { background: #9cdada; border-color: #d4f2f2 #5a8888 #5a8888 #d4f2f2 !important; }
.alert { outline: 2px solid #d81818; outline-offset: -4px; }
.white { background: #fff; border-color: #ddd #777 #777 #ddd !important; }
.gray { background: #ccc; border-color: #eee #777 #777 #eee !important; }
.amber { background: #fcc750; border-color: #ffe6a0 #9c7a28 #9c7a28 #ffe6a0 !important; }
.overview { flex: 1; display: flex; align-items: center; background: #000; }
.coords { height: 46px; display: flex; flex-direction: column; padding: 7px 0 0 1px; background: #52cdb0; border-top: 2px solid #b8e8dc; border-bottom: 2px solid #b8e8dc; box-shadow: inset 0 2px #2f6b5c; font: bold 15px/15px "Liberation Mono", monospace; }

.command { display: flex; height: 33px; background: #000; padding: 1px 0; }
.command > button { width: 31px; margin-right: 1px; display: flex; align-items: center; justify-content: center; background: #ffc; border: 3px solid #ffc; box-shadow: inset 0 0 0 1px #b8b890; }
.command > button.on { width: 29px; border-color: #52cdb0; }
.command label { width: 48px; padding-left: 4px; background: #ffc; font: bold 12px/31px "Liberation Mono", monospace; }
.command input { flex: 1; margin-left: 1px; padding-left: 4px; background: #ffc; border: 3px solid #ffc; box-shadow: inset 2px 2px #b8b890; font-size: 15px; }
.unit { width: 72px; margin-left: 1px; padding: 2px 0 2px 6px; overflow: hidden; background: #52cdb0; }
.unit button { width: 80px; height: 27px; padding-left: 5px; display: flex; align-items: center; gap: 8px; border: 2px solid #a4ecd8; border-bottom-color: #2f6b5c; font: bold 15px/20px "Liberation Mono", monospace; }
.unit i { width: 12px; height: 7px; border: 2px solid #c8f4e8; border-right-color: #2f6b5c; border-bottom-color: #2f6b5c; }
.status { height: 32px; padding: 3px 2px 4px; background: #6a9494; }
.status div { height: 100%; background: #b4ffff; border: 3px solid #ccffff; border-bottom: 2px solid #6a9494; outline: 1px solid #000; }
.floor { height: 3px; background: #b0bec8; }

.word { position: absolute; left: 257px; top: 389px; bottom: 0; width: 1144px; display: flex; flex-direction: column; background: #fff; border: solid #e6eefc; border-width: 0 2px 0 1px; font-family: "Noto Sans", "Noto Sans CJK SC", sans-serif; box-shadow: 0 0 14px rgba(0, 0, 0, .4); }
.w-title { height: 34px; display: flex; align-items: center; padding: 0 17px 0 50px; background: #fff; }
.qat { width: 186px; height: 26px; display: flex; align-items: center; gap: 8px; padding-left: 16px; background: linear-gradient(#fff, #eef2f8); border: 1px solid #b4b8c0; border-left: 0; border-radius: 0 14px 14px 0; }
.qat .undo { margin-right: 5px; }
.spell { position: relative; margin-left: 3px; font: 10px/16px "Noto Sans CJK SC", sans-serif; height: 22px; }
.spell svg { position: absolute; left: 4px; bottom: 0; }
.more { margin-left: 10px; }
.w-title h1 { flex: 1; margin: 0 0 0 62px; text-align: center; font-size: 16px; font-weight: 400; line-height: 20px; }
.w-title > svg:last-child { margin: 0 0 4px 192px; }
.orb { position: absolute; left: 5px; top: 9px; z-index: 2; }
.tabs { display: flex; height: 29px; padding: 1px 5px 0 60px; background: #bfdbff; border-bottom: 1px solid #9dbde8; color: #15428b; }
.tabs button { padding: 0 14px; border: 1px solid transparent; border-bottom: 0; font-size: 15px; line-height: 26px; }
.tabs .cur { padding: 0 11px; margin-right: 3px; background: linear-gradient(#fff, #dfeafa); border-color: #8fb2e4; border-radius: 4px 4px 0 0; box-shadow: 0 1px #e0eafa; }
.q { margin: 5px 0 0 auto; }

.ribbon { display: flex; height: 121px; gap: 3px; padding: 2px 1px; margin: 0 2px; border: 1px solid #8db2e3; border-top: 0; border-radius: 0 0 4px 4px; background: linear-gradient(#dbe7f5, #cddcf0 14%, #c7d8ed 15%, #d8e8f5 70%, #e3f4fe); color: #15428b; }
.rg { display: flex; flex-direction: column; height: 117px; border: 1px solid #a8c2e0; border-radius: 3px; box-shadow: inset 1px 1px rgba(255, 255, 255, .5); }
.rg footer { position: relative; height: 23px; background: #c1d8f0; text-align: center; color: #3e6aaa; font-size: 15px; line-height: 22px; }
.dlg { position: absolute; right: 6px; top: 5px; width: 8px; height: 8px; border-left: 1px solid #678; border-top: 1px solid #678; }
.dlg::after { content: ""; position: absolute; left: 4px; top: 4px; width: 4px; height: 4px; border-right: 2px solid #678; border-bottom: 2px solid #678; }
.rb { flex: 1; display: flex; }
.rows { flex-direction: column; }
.line { display: flex; gap: 3px; }
.clip { width: 84px; }
.clip footer { padding-right: 22px; }
.font { width: 367px; }
.font .rb { padding: 12px 0 0 2px; gap: 11px; }
.font .line { height: 30px; }
.para { width: 190px; }
.para .rb { padding: 4px 0 0 2px; gap: 4px; }
.style { width: 362px; }
.find { width: 49px; background: rgba(200, 222, 245, .5); align-items: center; }
.big { display: flex; flex-direction: column; align-items: center; font-size: 15px; line-height: 20px; }
.big svg { height: 32px; margin-bottom: 8px; }
.big .car { margin-top: 6px; }
.clip .big { width: 54px; padding: 7px 0 0 2px; }
.small { display: flex; flex-direction: column; gap: 10px; padding: 6px 0 0 3px; }
.car { display: block; flex: none; width: 0; height: 0; border: 3px solid transparent; border-top-color: #567ab0; border-bottom: 0; }
.combos { display: flex; margin-right: 1px; }
.combo { position: relative; display: flex; height: 30px; background: #eaf2fb; border: 1px solid #b3c7e1; color: #000; }
.combo select { appearance: none; width: 100%; padding: 0 2px; font-size: 15px; }
.combo::after { content: ""; position: absolute; right: 5px; top: 13px; border: 3px solid transparent; border-top-color: #567ab0; border-bottom: 0; }
.face { width: 145px; }
.size { width: 65px; }
.bg { display: flex; height: 26px; border: 1px solid #8fafd9; border-radius: 3px; background: linear-gradient(#d6e4f5, #c3d6ee 50%, #cfdff3); overflow: hidden; }
.bg button { width: 26px; height: 24px; display: flex; align-items: center; justify-content: center; line-height: 20px; }
.bg button + button { border-left: 1px solid #b5cae6; }
.para .bg { height: 25px; }
.para .bg button { height: 23px; }
.car-r { gap: 4px; }
.serif { font: bold 17px/20px "Liberation Serif", serif; color: #222; }
.serif sup { font-size: 9px; line-height: 9px; align-self: flex-start; color: #35548f; }
.mini { font-size: 13px; }
.wen { flex-direction: column; }
.wen small { font-size: 8px; line-height: 9px; font-weight: 600; color: #222; }
.bg .wen b { font-size: 12px; line-height: 13px; color: #2f56b8; }
.boxed span { width: 18px; height: 18px; line-height: 16px; border: 1px solid #35548f; text-align: center; }
.shaded span { width: 16px; height: 16px; line-height: 16px; background: #aaa; }
.ring span { width: 18px; height: 18px; border: 1px solid #222; border-radius: 9px; font-size: 12px; line-height: 15px; color: #222; text-align: center; }
.bg.w button { width: 28px; }
.bg.w button.un { width: 41px; gap: 12px; }
.un span { text-decoration: underline; }
.bg.w button.aa { width: 35px; font-size: 15px; }
.it { font-style: italic; }
.abc { font-size: 12px; text-decoration: line-through; }
.sub { font-weight: 700; font-size: 14px; color: #222; }
.sub sub, .sub sup { font-size: 8px; color: #35548f; line-height: 8px; }
.sub sub { align-self: flex-end; margin-bottom: 4px; } .sub sup { align-self: flex-start; margin-top: 4px; }
.bg.w2 button { width: 39px; }
.bg.w3 button { width: 38px; } .bg.w3b button { width: 39px; }
.bg.w27 button { width: 27px; }
.bg.w38 button { width: 36px; }
.bg .on { background: linear-gradient(#fdb65a, #ffe27a); }

.style .rb { padding: 4px 0 0 4px; }
.gallery { display: flex; height: 75px; align-items: center; background: #e0ebf8; gap: 4px; border: 1px solid #b9cfe9; }
.st { width: 81px; height: 62px; overflow: hidden; display: flex; flex-direction: column; align-items: center; background: #fff; color: #000; }
.st.sel { width: 89px; height: 68px; border: 3px solid #eba33f; border-bottom-color: #ffd34d; border-radius: 2px; }
.st:nth-child(3) { margin-left: 3px; }
.st span { height: 40px; line-height: 40px; font-family: "Liberation Serif", serif; white-space: nowrap; }
.st small { font-size: 14px; line-height: 20px; color: #15306b; }
.s1 { font-size: 14px; } .s2 { font-size: 27px; font-weight: 700; } .s3 { font-size: 20px; font-weight: 700; }
.spin { width: 18px; height: 75px; display: flex; flex-direction: column; }
.spin button { flex: 1; border: 1px solid #b3c7e1; display: flex; align-items: center; justify-content: center; background: #d3e2f4; }
.spin button:first-child { background: #e8e8e8; }
.upw { transform: rotate(180deg); opacity: .5; }
.bar { box-shadow: 0 -5px 0 -2px #567ab0; }
.chg { flex: 1; padding-top: 3px; }
.style .chg svg { margin-bottom: 8px; }
.find .big { padding-top: 3px; }
.tile { width: 36px; height: 37px; margin-bottom: 7px; display: flex; justify-content: center; align-items: center; border: 1px solid #a9c3e2; border-radius: 3px; background: linear-gradient(#dfeaf8 70%, #c4d8ef 70%); }
.big .tile svg { height: 16px; margin: 0; }

.doc { flex: 1; min-height: 0; display: flex; padding-top: 6px; overflow: hidden; background: linear-gradient(#b4cceb, #7c9fd0 50%, #5076ac); }
.pages { position: relative; flex: 1; display: flex; flex-direction: column; padding: 0 42px 0 47px; font-family: "Noto Sans", "Noto Sans CJK SC", sans-serif; }
.page { background: #fff; border: 1px solid #4c5f78; box-shadow: 3px 3px 5px rgba(20, 40, 80, .5); color: #0505c4; font-size: 21px; overflow: hidden; }
.page p { margin: 0; padding-left: 155px; height: 54px; line-height: 54px; white-space: nowrap; }
.r { color: #e00808; }
.mono { font-family: "DejaVu Sans Mono", monospace; font-size: 20px; line-height: 20px; white-space: pre; }
.page s { text-decoration: none; font-size: 12px; line-height: 12px; color: #888; padding-left: 1px; }
.first { height: 227px; flex: none; border-top: 0; }
.first p:first-child { margin-top: -28px; }
.second { margin-top: 18px; flex: 1; }
.corners { display: flex; justify-content: space-between; padding: 0 125px 0 124px; }
.corners i { width: 32px; height: 31px; border: 0 solid #aaa; }
.corners i:first-child { border-right-width: 1px; } .corners i:last-child { border-left-width: 1px; }
.top { margin-top: 21px; } .top i { border-top-width: 1px; }
.bottom { margin-top: 92px; } .bottom i { border-bottom-width: 1px; }
.highlight { position: absolute; left: 166px; right: 97px; top: 23px; height: 454px; border: 4px solid #fbfb1e; box-shadow: 1px 2px 4px rgba(0, 0, 0, .6), inset 2px 2px 4px rgba(0, 0, 0, .6); }
.scroll { width: 17px; padding: 0 1px; display: flex; flex-direction: column; background: #7c9ac6; border-left: 1px solid #a8c2e8; }
.thumb { width: 15px; height: 50px; margin-top: 299px; border: 1px solid #4c6a98; background: repeating-linear-gradient(#678 0 1px, transparent 1px 3px) 3px 20px / 8px 9px no-repeat, linear-gradient(90deg, #f0f4fa, #b8c8dc); }
</style>
